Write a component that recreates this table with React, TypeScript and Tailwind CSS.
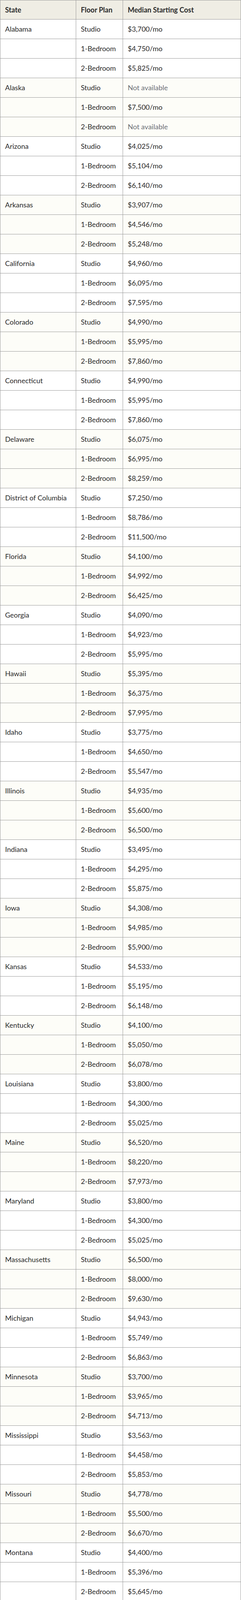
type StateRow = {
  state: string;
  costs: [string, string, string];
};

const plans = ["Studio", "1-Bedroom", "2-Bedroom"];

const rows: StateRow[] = [
  { state: "Alabama", costs: ["$3,700/mo", "$4,750/mo", "$5,825/mo"] },
  { state: "Alaska", costs: ["Not available", "$7,500/mo", "Not available"] },
  { state: "Arizona", costs: ["$4,025/mo", "$5,104/mo", "$6,140/mo"] },
  { state: "Arkansas", costs: ["$3,907/mo", "$4,546/mo", "$5,248/mo"] },
  { state: "California", costs: ["$4,960/mo", "$6,095/mo", "$7,595/mo"] },
  { state: "Colorado", costs: ["$4,990/mo", "$5,995/mo", "$7,860/mo"] },
  { state: "Connecticut", costs: ["$4,990/mo", "$5,995/mo", "$7,860/mo"] },
  { state: "Delaware", costs: ["$6,075/mo", "$6,995/mo", "$8,259/mo"] },
  { state: "District of Columbia", costs: ["$7,250/mo", "$8,786/mo", "$11,500/mo"] },
  { state: "Florida", costs: ["$4,100/mo", "$4,992/mo", "$6,425/mo"] },
  { state: "Georgia", costs: ["$4,090/mo", "$4,923/mo", "$5,995/mo"] },
  { state: "Hawaii", costs: ["$5,395/mo", "$6,375/mo", "$7,995/mo"] },
  { state: "Idaho", costs: ["$3,775/mo", "$4,650/mo", "$5,547/mo"] },
  { state: "Illinois", costs: ["$4,935/mo", "$5,600/mo", "$6,500/mo"] },
  { state: "Indiana", costs: ["$3,495/mo", "$4,295/mo", "$5,875/mo"] },
  { state: "Iowa", costs: ["$4,308/mo", "$4,985/mo", "$5,900/mo"] },
  { state: "Kansas", costs: ["$4,533/mo", "$5,195/mo", "$6,148/mo"] },
  { state: "Kentucky", costs: ["$4,100/mo", "$5,050/mo", "$6,078/mo"] },
  { state: "Louisiana", costs: ["$3,800/mo", "$4,300/mo", "$5,025/mo"] },
  { state: "Maine", costs: ["$6,520/mo", "$8,220/mo", "$7,973/mo"] },
  { state: "Maryland", costs: ["$3,800/mo", "$4,300/mo", "$5,025/mo"] },
  { state: "Massachusetts", costs: ["$6,500/mo", "$8,000/mo", "$9,630/mo"] },
  { state: "Michigan", costs: ["$4,943/mo", "$5,749/mo", "$6,863/mo"] },
  { state: "Minnesota", costs: ["$3,700/mo", "$3,965/mo", "$4,713/mo"] },
  { state: "Mississippi", costs: ["$3,563/mo", "$4,458/mo", "$5,853/mo"] },
  { state: "Missouri", costs: ["$4,778/mo", "$5,500/mo", "$6,670/mo"] },
  { state: "Montana", costs: ["$4,400/mo", "$5,396/mo", "$5,645/mo"] },
  { state: "Nebraska", costs: ["$4,350/mo", "$5,035/mo", "$6,084/mo"] },
  { state: "Nevada", costs: ["$3,848/mo", "$4,940/mo", "$6,550/mo"] },
  { state: "New Hampshire", costs: ["$5,913/mo", "$7,400/mo", "$8,180/mo"] },
  { state: "New Jersey", costs: ["$6,000/mo", "$7,600/mo", "$8,998/mo"] },
  { state: "New Mexico", costs: ["$4,507/mo", "$5,415/mo", "$6,619/mo"] },
  { state: "New York", costs: ["$5,866/mo", "$7,067/mo", "$8,375/mo"] },
  { state: "North Carolina", costs: ["$4,793/mo", "$6,205/mo", "$6,517/mo"] },
  { state: "North Dakota", costs: ["$3,580/mo", "$3,955/mo", "$4,867/mo"] },
  { state: "Ohio", costs: ["$4,495/mo", "$5,380/mo", "$6,700/mo"] },
  { state: "Oklahoma", costs: ["$4,135/mo", "$4,838/mo", "$5,885/mo"] },
  { state: "Oregon", costs: ["$4,912/mo", "$5,695/mo", "$6,940/mo"] },
  { state: "Pennsylvania", costs: ["$4,665/mo", "$6,000/mo", "$7,298/mo"] },
  { state: "Rhode Island", costs: ["$4,975/mo", "$6,325/mo", "$8,495/mo"] },
  { state: "South Carolina", costs: ["$4,210/mo", "$5,040/mo", "$5,933/mo"] },
  { state: "South Dakota", costs: ["$4,245/mo", "$5,414/mo", "$5,670/mo"] },
  { state: "Tennessee", costs: ["$4,250/mo", "$5,295/mo", "$6,050/mo"] },
  { state: "Texas", costs: ["$4,095/mo", "$4,950/mo", "$6,340/mo"] },
  { state: "Utah", costs: ["$3,975/mo", "$4,550/mo", "$6,095/mo"] },
  { state: "Vermont", costs: ["$7,095/mo", "$9,405/mo", "$10,403/mo"] },
  { state: "Virginia", costs: ["$5,271/mo", "$6,520/mo", "$7,550/mo"] },
  { state: "Washington", costs: ["$4,430/mo", "$5,295/mo", "$6,850/mo"] },
  { state: "West Virginia", costs: ["$4,660/mo", "$5,505/mo", "$6,605/mo"] },
  { state: "Wisconsin", costs: ["$4,783/mo", "$5,295/mo", "$5,875/mo"] },
  { state: "Wyoming", costs: ["$3,900/mo", "$5,500/mo", "$7,385/mo"] },
];

const gridCols = "grid grid-cols-[193px_120px_1fr]";
const cellClass = "flex items-center px-3 whitespace-nowrap";
const divider = "border-l border-[#9a9a9a]";

export default function App() {
  return (
    <div className="w-[617px] bg-white font-[Lato,sans-serif] text-[18px] text-[#2a2a2a]">
      <div className="border border-[#9a9a9a]">
        {/* header */}
        <div className={`${gridCols} h-[48px] bg-[#efede4] font-bold`}>
          <div className={cellClass}>State</div>
          <div className={`${cellClass} ${divider}`}>Floor Plan</div>
          <div className={`${cellClass} ${divider}`}>Median Starting Cost</div>
        </div>

        {rows.map((row, i) =>
          plans.map((plan, j) => {
            const cost = row.costs[j];
            const missing = cost === "Not available";
            return (
              <div
                key={row.state + plan}
                className={`${gridCols} h-[50px] border-t border-[#9a9a9a] ${
                  i % 2 === 1 ? "bg-[#fdfdf8]" : "bg-white"
                }`}
              >
                <div className={cellClass}>{j === 0 ? row.state : ""}</div>
                <div className={`${cellClass} ${divider}`}>{plan}</div>
                <div className={`${cellClass} ${divider} ${missing ? "text-[#6b6f76]" : ""}`}>
                  {cost}
                </div>
              </div>
            );
          })
        )}
      </div>
    </div>
  );
}
